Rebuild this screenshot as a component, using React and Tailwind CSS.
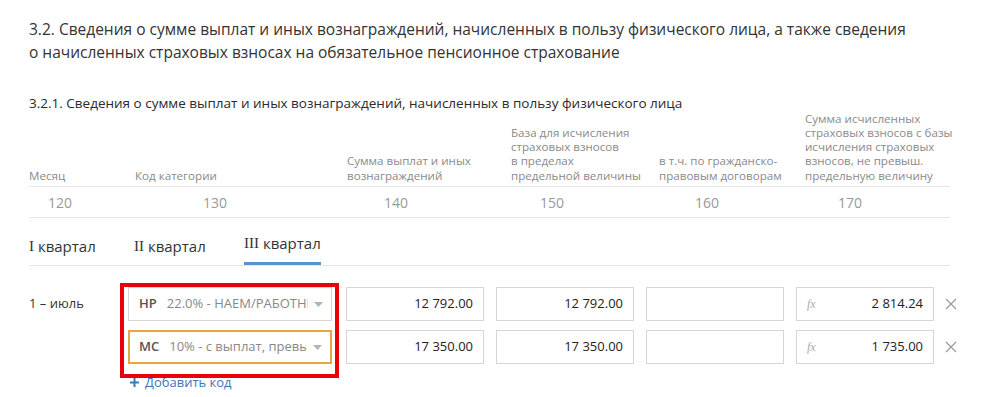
import React from "react";

function XIcon() {
  return (
    <svg width="12" height="12" viewBox="0 0 12 12" className="shrink-0">
      <path d="M1 1 L11 11 M11 1 L1 11" stroke="#9a9a9a" strokeWidth="1.2" fill="none" />
    </svg>
  );
}

function Arrow() {
  return (
    <svg width="9" height="5" viewBox="0 0 9 5" className="shrink-0">
      <path d="M0 0 L9 0 L4.5 5 Z" fill="#b3b3b3" />
    </svg>
  );
}

function Select({ code, text, active }) {
  return (
    <div
      className={
        "w-[204px] h-[34px] shrink-0 flex items-center pl-[10px] pr-[8px] bg-white " +
        (active ? "border-2 border-[#e3a83f]" : "border border-[#d6d6d6]")
      }
    >
      <span className={"font-semibold text-[13px] text-[#555] " + (active ? "ml-[-1px]" : "")}>{code}</span>
      <span className="ml-[10px] flex-1 overflow-hidden whitespace-nowrap text-[13px] text-[#888]">{text}</span>
      <span className="ml-[6px]"><Arrow /></span>
    </div>
  );
}

function Input({ value, fx }) {
  return (
    <div className="w-[138px] h-[34px] shrink-0 border border-[#d6d6d6] flex items-center pr-[10px] pl-[10px] text-[13px] text-[#222]">
      {fx && <span className="font-['Liberation_Serif'] italic text-[12px] text-[#aaa]">fx</span>}
      <span className="ml-auto">{value}</span>
    </div>
  );
}

function DataRow({ month, code, text, active, v1, v2, v3, v4 }) {
  return (
    <div className="flex items-center h-[34px]">
      <div className="w-[99px] shrink-0 text-[13px] text-[#333]">{month}</div>
      <Select code={code} text={text} active={active} />
      <div className="ml-[14px] flex gap-[12px]">
        <Input value={v1} />
        <Input value={v2} />
        <Input value={v3} />
        <Input value={v4} fx />
      </div>
      <div className="ml-[11px]"><XIcon /></div>
    </div>
  );
}

function Roman({ n }) {
  return <span className="font-['Liberation_Serif',serif] text-[15px]">{n}</span>;
}

export default function App() {
  return (
    <div className="relative w-[984px] h-[397px] bg-white overflow-hidden font-['Open_Sans',sans-serif] text-[#333]">
      <div className="pl-[29px] pt-[18px] w-[950px]">
        <div className="text-[15.5px] leading-[23px] text-[#333] whitespace-nowrap">
          3.2. Сведения о сумме выплат и иных вознаграждений, начисленных в пользу физического лица, а также сведения
          <br />
          о начисленных страховых взносах на обязательное пенсионное страхование
        </div>
        <div className="mt-[30px] text-[13.5px] leading-[18px] text-[#2a2a2a] whitespace-nowrap">
          3.2.1. Сведения о сумме выплат и иных вознаграждений, начисленных в пользу физического лица
        </div>

        {/* header */}
        <div className="flex items-end h-[75px] pb-[3px] border-b border-[#e6e6e6] text-[11.6px] leading-[14.3px] text-[#8a8a8a] whitespace-nowrap">
          <div className="w-[106px] shrink-0">Месяц</div>
          <div className="w-[212px] shrink-0">Код категории</div>
          <div className="w-[164px] shrink-0">Сумма выплат и иных<br />вознаграждений</div>
          <div className="w-[148px] shrink-0">База для исчисления<br />страховых взносов<br />в пределах<br />предельной величины</div>
          <div className="w-[146px] shrink-0">в т.ч. по гражданско-<br />правовым договорам</div>
          <div className="w-[145px] shrink-0">Сумма исчисленных<br />страховых взносов с базы<br />исчисления страховых<br />взносов, не превыш.<br />предельную величину</div>
        </div>

        {/* numbers */}
        <div className="flex items-center h-[31px] pt-[1px] border-b border-[#e6e6e6] text-[14px] text-[#999]">
          <div className="w-[62px] shrink-0 text-center">120</div>
          <div className="w-[248px] shrink-0 text-center">130</div>
          <div className="w-[114px] shrink-0 text-center">140</div>
          <div className="w-[198px] shrink-0 text-center">150</div>
          <div className="w-[112px] shrink-0 text-center">160</div>
          <div className="w-[174px] shrink-0 text-center">170</div>
        </div>

        {/* tabs */}
        <div className="flex items-end h-[48px] border-b border-[#e6e6e6] text-[15px] text-[#333]">
          <div className="w-[105px] shrink-0 h-[45px] pt-[8px] flex items-center whitespace-nowrap"><Roman n="I" />&nbsp;квартал</div>
          <div className="w-[110px] shrink-0 h-[45px] pt-[8px] flex items-center whitespace-nowrap"><Roman n="II" />&nbsp;квартал</div>
          <div className="h-[48px] flex flex-col">
            <div className="h-[45px] pt-[8px] flex items-center whitespace-nowrap"><Roman n="III" />&nbsp;квартал</div>
            <div className="h-[3px] bg-[#5b93cc]" />
          </div>
        </div>

        {/* data rows */}
        <div className="mt-[21px] flex flex-col gap-[9px]">
          <DataRow month="1 – июль" code="НР" text="22.0% - НАЕМ/РАБОТНИКИ" v1="12 792.00" v2="12 792.00" v3="" v4="2 814.24" />
          <DataRow month="" code="МС" text="10% - с выплат, превышающих" active v1="17 350.00" v2="17 350.00" v3="" v4="1 735.00" />
        </div>
        <div className="mt-[9px] ml-[101px] flex items-center gap-[6px] text-[13px] text-[#3b78b8]">
          <svg width="9" height="9" viewBox="0 0 9 9">
            <path d="M4.5 0 V9 M0 4.5 H9" stroke="#3b78b8" strokeWidth="2" />
          </svg>
          <span>Добавить код</span>
        </div>
      </div>

      {/* red annotation frame */}
      <div className="absolute left-[120px] top-[283px] w-[219px] h-[95px] border-4 border-[#e8000b]" />
    </div>
  );
}
